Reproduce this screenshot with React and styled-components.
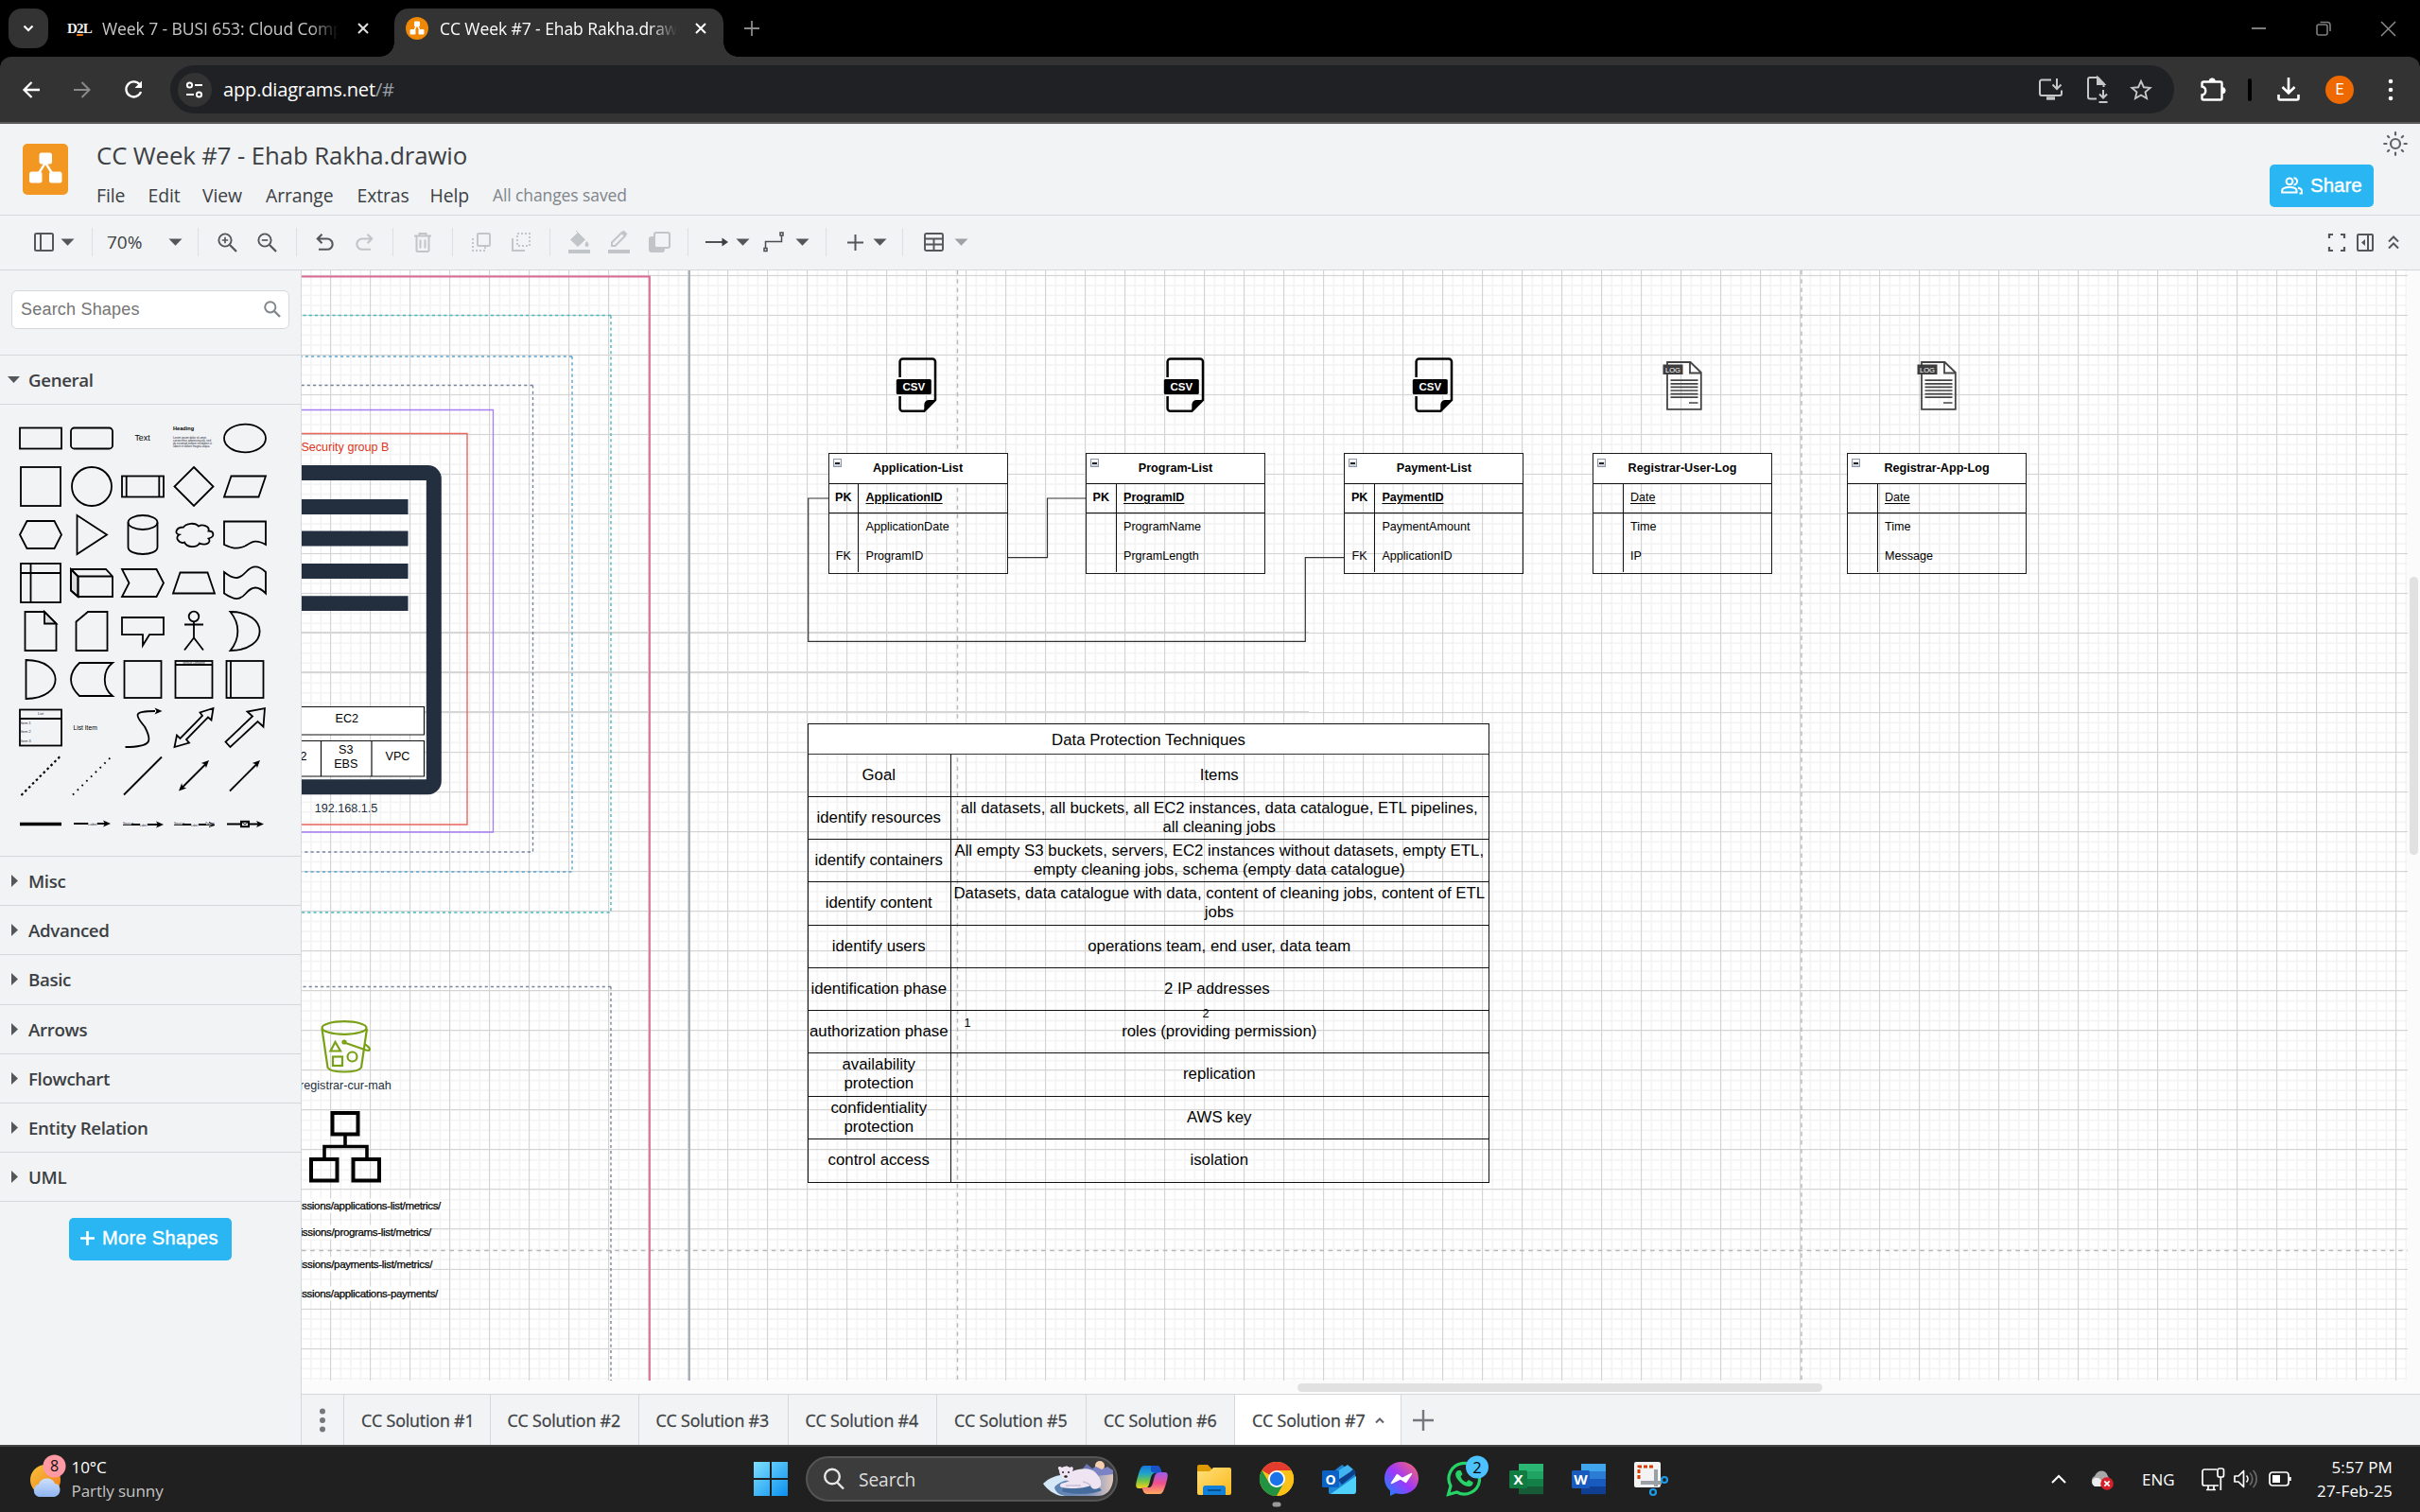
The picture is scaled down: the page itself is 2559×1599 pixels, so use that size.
import React from "react";
import styled, { createGlobalStyle, css } from "styled-components";

const UI = `"Open Sans", "Noto Sans", sans-serif`;
const ARIAL = `"Liberation Sans", Arial, sans-serif`;

const Global = createGlobalStyle`
  *, *::before, *::after { box-sizing: border-box; }
  html, body { margin: 0; padding: 0; background: #f1f3f4; }
  body { font-family: ${UI}; overflow: hidden; }
`;

const Screen = styled.div`
  display: flex;
  flex-direction: column;
  width: 2559px;
  height: 1599px;
  overflow: hidden;
`;

/* ---------- generic pieces ---------- */
const Slot = styled.div`
  flex: none;
  display: flex;
  align-items: center;
  justify-content: center;
  width: ${(p) => p.$w}px;
  margin-left: ${(p) => p.$ml || 0}px;
`;
const Label = styled.div`
  flex: none;
  white-space: nowrap;
  width: ${(p) => (p.$w ? `${p.$w}px` : "auto")};
  margin-left: ${(p) => p.$ml || 0}px;
  font-size: ${(p) => p.$s}px;
  letter-spacing: ${(p) => p.$ls || 0}px;
  color: ${(p) => p.$c || "inherit"};
  font-weight: ${(p) => p.$wt || 400};
`;

/* ---------- browser chrome ---------- */
const TabStrip = styled.div`
  flex: none;
  height: 60px;
  background: #000;
  display: flex;
  align-items: flex-end;
`;
const StripCell = styled.div`
  height: 60px;
  display: flex;
  align-items: center;
  width: ${(p) => p.$w}px;
  flex: none;
`;
const TabSearch = styled.div`
  width: 42px;
  height: 42px;
  margin-left: 9px;
  border-radius: 14px;
  background: #333;
  display: flex;
  align-items: center;
  justify-content: center;
`;
const D2L = styled.div`
  font: 700 15px "Liberation Serif", serif;
  color: #f0f0f0;
  width: 37px;
  letter-spacing: -0.8px;
  margin-left: 20px;
  span { text-decoration: underline; text-decoration-color: #e87511; text-decoration-thickness: 2px; }
`;
const FadeText = styled.div`
  flex: none;
  width: ${(p) => p.$w}px;
  margin-left: ${(p) => p.$ml || 0}px;
  overflow: hidden;
  white-space: nowrap;
  font-size: 17.5px;
  letter-spacing: ${(p) => p.$ls}px;
  color: ${(p) => p.$c};
  -webkit-mask-image: linear-gradient(90deg, #000 88%, transparent 100%);
  mask-image: linear-gradient(90deg, #000 88%, transparent 100%);
`;
const ActiveTab = styled.div`
  position: relative;
  flex: none;
  width: 348px;
  height: 51px;
  background: #333;
  border-radius: 15px 15px 0 0;
  display: flex;
  align-items: center;
  padding: 0 0 9px 12px;
  &::before, &::after {
    content: "";
    position: absolute;
    bottom: 0;
    width: 15px;
    height: 15px;
  }
  &::before { left: -15px; background: radial-gradient(circle at 0 0, transparent 14.5px, #333 15px); }
  &::after { right: -15px; background: radial-gradient(circle at 100% 0, transparent 14.5px, #333 15px); }
`;
const NavWrap = styled.div`
  flex: none;
  background: #000;
`;
const NavBar = styled.div`
  height: 71px;
  background: #333;
  border-radius: 12px 12px 0 0;
  border-bottom: 2px solid #5a5a5a;
  display: flex;
  align-items: center;
`;
const Omnibox = styled.div`
  flex: none;
  width: 2119px;
  height: 51px;
  margin-left: 15px;
  border-radius: 26px;
  background: #202124;
  display: flex;
  align-items: center;
  padding-left: 8px;
`;
const SiteInfo = styled.div`
  width: 36px;
  height: 36px;
  border-radius: 50%;
  background: #333;
  display: flex;
  align-items: center;
  justify-content: center;
`;
const UrlTail = styled.span`color: #9aa0a6;`;
const Divider = styled.div`
  width: 4px;
  height: 24px;
  border-radius: 2px;
  background: #000;
  margin-left: ${(p) => p.$ml}px;
`;
const Avatar = styled.div`
  width: 30px;
  height: 30px;
  border-radius: 50%;
  background: #ee6a00;
  color: #fff;
  font: 16px Roboto, sans-serif;
  display: flex;
  align-items: center;
  justify-content: center;
`;

/* ---------- application header ---------- */
const Header = styled.div`
  flex: none;
  height: 97px;
  background: #f1f3f5;
  border-bottom: 1px solid #d5d8db;
  display: flex;
`;
const Logo = styled.div`
  width: 48px;
  height: 54px;
  margin: 21px 0 0 24px;
  border-radius: 5px;
  background: #f29722;
`;
const HeadText = styled.div`
  flex: 1;
  margin-left: 30px;
  color: #3c4043;
`;
const DocTitle = styled.div`
  margin-top: 13px;
  height: 41px;
  line-height: 40px;
  font-size: 25.8px;
  letter-spacing: -0.12px;
  white-space: nowrap;
`;
const Menu = styled.div`
  display: flex;
  align-items: center;
  height: 42px;
`;
const HeadRight = styled.div`
  width: 159px;
  display: flex;
  flex-direction: column;
`;
const SunRow = styled.div`
  height: 43px;
  display: flex;
  justify-content: flex-end;
  align-items: center;
  padding: 0 13px 1px 0;
`;
const BlueButton = styled.div`
  background: #29b6f2;
  color: #fff;
  border-radius: 5px;
  display: flex;
  align-items: center;
  width: ${(p) => p.$w}px;
  height: 45px;
  padding: 0 0 2px 12px;
  font: ${(p) => p.$s}px ${ARIAL};
  -webkit-text-stroke: 0.4px #fff;
  letter-spacing: ${(p) => p.$ls || 0}px;
  white-space: nowrap;
  gap: ${(p) => p.$gap}px;
`;
const ToolBar = styled.div`
  flex: none;
  height: 58px;
  background: #f1f3f5;
  border-bottom: 1px solid #d5d8db;
  display: flex;
  align-items: center;
  padding-bottom: 1px;
`;
const Sep = styled.div`
  flex: none;
  width: 1px;
  height: 30px;
  margin-left: ${(p) => p.$ml}px;
  background: #dcdfe3;
`;
const Grow = styled.div`flex: 1;`;

/* ---------- body ---------- */
const Body = styled.div`
  flex: none;
  height: 1242px;
  display: flex;
`;
const Sidebar = styled.div`
  flex: none;
  width: 319px;
  background: #f1f3f5;
  border-right: 1px solid #d5d8db;
`;
const SearchArea = styled.div`
  height: 90px;
  padding: 21px 12px 0;
  border-bottom: 1px solid #d5d8db;
`;
const SearchBox = styled.div`
  height: 41px;
  background: #fff;
  border: 1px solid #d5d8db;
  border-radius: 6px;
  display: flex;
  align-items: center;
  justify-content: space-between;
  padding: 0 8px 1px 9px;
  font: 18px ${ARIAL};
  letter-spacing: 0.2px;
  color: #757575;
`;
const Section = styled.div`
  height: ${(p) => p.$h || 52.2}px;
  border-bottom: 1px solid #d5d8db;
  display: flex;
  align-items: center;
  gap: ${(p) => (p.$open ? 9 : 11)}px;
  padding-left: ${(p) => (p.$open ? 8 : 12)}px;
  color: #3c4043;
  font-size: 18.7px;
  font-weight: 600;
  letter-spacing: -0.35px;
`;
const Palette = styled.div`
  display: grid;
  grid-template-columns: repeat(5, 54px);
  grid-auto-rows: 51px;
  height: 478px;
  padding: 10px 0 0 16px;
  border-bottom: 1px solid #d5d8db;
`;
const MoreArea = styled.div`padding: 17px 0 0 73px;`;

const Work = styled.div`
  flex: 1;
  display: flex;
  flex-direction: column;
`;
const CanvasRow = styled.div`
  display: flex;
  height: 1174px;
`;
const Canvas = styled.div`
  position: relative;
  width: 2227px;
  height: 1174px;
  background: #fff;
  overflow: hidden;
  color: #000;
  font-family: ${ARIAL};
`;
const Drawing = styled.svg`
  position: absolute;
  left: 0;
  top: 0;
`;
const VTrack = styled.div`
  flex: 1;
  background: #fbfbfb;
  padding: 324px 0 0 2px;
`;
const VThumb = styled.div`
  width: 9px;
  height: 294px;
  border-radius: 5px;
  background: #e1e1e1;
`;
const HTrack = styled.div`
  height: 14px;
  background: #fbfbfb;
  padding: 3px 0 0 1053px;
`;
const HThumb = styled.div`
  width: 555px;
  height: 9px;
  border-radius: 5px;
  background: #e1e1e1;
`;
const PageTabs = styled.div`
  height: 54px;
  background: #f1f3f5;
  border-top: 1px solid #d5d8db;
  display: flex;
`;
const PageTab = styled.div`
  flex: none;
  width: ${(p) => p.$w}px;
  border-right: 1px solid #d5d8db;
  background: ${(p) => (p.$on ? "#fff" : "transparent")};
  display: flex;
  align-items: center;
  padding: 0 0 0 18px;
  gap: 11px;
  color: #3c4043;
  font-size: 17.8px;
  font-weight: 500;
  letter-spacing: -0.15px;
  -webkit-text-stroke: 0.3px #3c4043;
  white-space: nowrap;
`;
const TabMenu = styled.div`
  flex: none;
  width: 45px;
  border-right: 1px solid #d5d8db;
  display: flex;
  align-items: center;
  justify-content: center;
`;

/* ---------- diagram nodes ---------- */
const place = css`
  position: absolute;
  left: ${(p) => p.$x - 319}px;
  top: ${(p) => p.$y - 286}px;
`;
const Caption = styled.div`
  ${place}
  transform: translate(${(p) => (p.$right ? "-100%" : "-50%")}, -50%);
  font-size: ${(p) => p.$s || 12.6}px;
  line-height: 15px;
  color: ${(p) => p.$c || "#000"};
  background: ${(p) => p.$bg || "none"};
  letter-spacing: ${(p) => p.$ls || 0}px;
  -webkit-text-stroke: ${(p) => (p.$bg ? "0.25px #000" : "0")};
  text-align: center;
  white-space: nowrap;
`;
const Entity = styled.div`
  ${place}
  width: 190px;
  height: 127.5px;
  border: 1px solid #1c1c1c;
  font-size: 12.6px;
`;
const EntityHead = styled.div`
  position: relative;
  height: 32px;
  background: #fff;
  border-bottom: 1px solid #111;
  font-weight: 700;
  padding-bottom: 2px;
  display: flex;
  align-items: center;
  justify-content: center;
`;
const Fold = styled.div`
  position: absolute;
  left: 4px;
  top: 5px;
  width: 9px;
  height: 9px;
  border: 1px solid #8d95a8;
  background: linear-gradient(#fff, #c9cdd8);
  &::after {
    content: "";
    position: absolute;
    left: 1px;
    top: 3px;
    width: 5px;
    height: 1.5px;
    background: #222;
  }
`;
const EntityRow = styled.div`
  height: 31px;
  display: flex;
  border-bottom: ${(p) => (p.$key ? "1px solid #111" : "none")};
  font-weight: ${(p) => (p.$bold ? 700 : 400)};
  line-height: ${(p) => (p.$key ? 28 : 29)}px;
`;
const KeyCell = styled.div`
  width: 31.5px;
  border-right: 1px solid #111;
  text-align: center;
`;
const NameCell = styled.div`
  padding-left: 7.5px;
  text-decoration: ${(p) => (p.$u ? "underline" : "none")};
  text-underline-offset: 2px;
`;
const Protect = styled.div`
  ${place}
  width: 721px;
  height: 486px;
  border: 1px solid #111;
  font-size: 16.8px;
  line-height: 20px;
  text-align: center;
`;
const ProtectTitle = styled.div`
  height: 31.5px;
  background: #fff;
  border-bottom: 1px solid #333;
  line-height: 33px;
`;
const ProtectRow = styled.div`
  display: grid;
  grid-template-columns: 150.5px 1fr;
  height: 45.25px;
  border-bottom: ${(p) => (p.$last ? "none" : "1px solid #111")};
`;
const ProtectCell = styled.div`
  display: flex;
  align-items: center;
  justify-content: center;
  white-space: pre;
  padding-right: 1px;
  border-right: ${(p) => (p.$first ? "1px solid #111" : "none")};
`;

/* ---------- taskbar ---------- */
const Taskbar = styled.div`
  flex: none;
  height: 71px;
  background: #202020;
  border-top: 2px solid #434343;
  display: flex;
  align-items: center;
  color: #fff;
  padding-bottom: 1px;
`;
const TwoLines = styled.div`
  display: flex;
  flex-direction: column;
  text-align: ${(p) => p.$align || "left"};
  width: ${(p) => p.$w}px;
  margin-left: ${(p) => p.$ml}px;
  font-size: 17px;
  line-height: 25px;
  padding-bottom: 1px;
  white-space: nowrap;
  letter-spacing: ${(p) => p.$ls || 0}px;
  span + span { color: ${(p) => p.$c2 || "#fff"}; }
`;
const SearchPill = styled.div`
  width: 330px;
  height: 48px;
  margin-left: 19px;
  border-radius: 24px;
  border: 2px solid #555;
  background: #3c3c3c;
  display: flex;
  align-items: center;
  padding-left: 16px;
`;
const Apps = styled.div`
  display: flex;
  align-items: center;
  margin-left: 17px;
  gap: 28px;
`;
const AppIcon = styled.svg`
  width: 38px;
  height: 48px;
  overflow: visible;
`;
const HiddenDefs = styled.svg`
  width: 0;
  height: 0;
  flex: none;
`;

const G = "#54575a";
const Svg = ({ w, h, children, vb, ...r }) => (
  <svg width={w} height={h} viewBox={vb || `0 0 ${w} ${h}`} fill="none" overflow="visible" {...r}>
    {children}
  </svg>
);
const Tri = ({ c = "#54575a" }) => (
  <Svg w={15} h={8}><path d="M0.5 0.5H14.5L7.5 7.8Z" fill={c} /></Svg>
);
const XIcon = ({ c = "#fff" }) => (
  <Svg w={12} h={12} stroke={c} strokeWidth="2"><path d="M1 1 11 11M11 1 1 11" /></Svg>
);

const Browser = () => (
  <>
    <TabStrip>
      <StripCell $w={417}>
        <TabSearch><Svg w={12} h={8} stroke="#fff" strokeWidth="2.2"><path d="M1.5 1.5 6 6 10.5 1.5" /></Svg></TabSearch>
        <D2L>D<span>2</span>L</D2L>
        <FadeText $w={250} $c="#c7c7c7" $ls={-0.08}>Week 7 - BUSI 653: Cloud Computing</FadeText>
        <Slot $w={20} $ml={16}><XIcon c="#e0e0e0" /></Slot>
      </StripCell>
      <ActiveTab>
        <Svg w={24} h={24}>
          <circle cx="12" cy="12" r="12" fill="#f08705" />
          <g stroke="#fff" strokeWidth="1.6"><path d="M12 8 8 16M12 8 16 16" /></g>
          <g fill="#fff"><rect x="9" y="4.5" width="6" height="5.5" rx="1" /><rect x="4.5" y="13" width="6" height="5.5" rx="1" /><rect x="13.5" y="13" width="6" height="5.5" rx="1" /></g>
        </Svg>
        <FadeText $w={251} $c="#fff" $ls={-0.08} $ml={12}>CC Week #7 - Ehab Rakha.drawio</FadeText>
        <Slot $w={20} $ml={15}><XIcon /></Slot>
      </ActiveTab>
      <StripCell $w={60}><Slot $w={60}><Svg w={16} h={16} stroke="#8a8a8a" strokeWidth="1.8"><path d="M8 0V16M0 8H16" /></Svg></Slot></StripCell>
      <Grow />
      <StripCell $w={207}>
        <Slot $w={72}><Svg w={15} h={2}><path d="M0 1H15" stroke="#7d7d7d" strokeWidth="2" /></Svg></Slot>
        <Slot $w={66}>
          <Svg w={16} h={16} stroke="#7d7d7d" strokeWidth="1.6"><rect x="1" y="4" width="11" height="11" rx="2" /><path d="M4.5 1.5H12a3 3 0 0 1 3 3V11" /></Svg>
        </Slot>
        <Slot $w={71}><Svg w={15} h={15} stroke="#8a8a8a" strokeWidth="1.5"><path d="M0 0 15 15M15 0 0 15" /></Svg></Slot>
      </StripCell>
    </TabStrip>
    <NavWrap>
      <NavBar>
        <Slot $w={66}><Svg w={18} h={18} stroke="#fff" strokeWidth="2.3"><path d="M18 9H1.5M9.5 1 1.5 9 9.5 17" /></Svg></Slot>
        <Slot $w={42}><Svg w={18} h={18} stroke="#8a8a8a" strokeWidth="2"><path d="M0 9H16.5M8.5 1 16.5 9 8.5 17" /></Svg></Slot>
        <Slot $w={48} $ml={9}>
          <Svg w={19} h={19}><path d="M15.8 4.6A8 8 0 1 0 17 12" stroke="#fff" strokeWidth="2.3" /><path d="M18 0.5V8H10.5Z" fill="#fff" /></Svg>
        </Slot>
        <Omnibox>
          <SiteInfo>
            <Svg w={20} h={18} stroke="#fff" strokeWidth="2"><circle cx="4.5" cy="4" r="2.6" /><path d="M10 4H18M1 14H9" /><circle cx="14.5" cy="14" r="2.6" /></Svg>
          </SiteInfo>
          <Label $s={20.1} $c="#fff" $ml={12} $w={1687} $ls={-0.2}>app.diagrams.net<UrlTail>/#</UrlTail></Label>
          <Slot $w={50} $ml={220}>
            <Svg w={25} h={23} stroke="#c7c7c7" strokeWidth="2"><path d="M13 1.5H3a2 2 0 0 0-2 2V16a2 2 0 0 0 2 2H22a2 2 0 0 0 2-2V12.5" /><path d="M19 0V10M14.5 6.5 19 11 23.5 6.5" /><path d="M8 21H17" strokeWidth="3.4" /></Svg>
          </Slot>
          <Slot $w={50}>
            <Svg w={22} h={28} stroke="#c7c7c7" strokeWidth="2"><path d="M10 23.5H3a2 2 0 0 1-2-2V3a2 2 0 0 1 2-2H11.5L17.5 7.5V11" /><path d="M11 1V8H18Z" fill="#c7c7c7" /><path d="M17 14V22M13 18.5 17 22.5 21 18.5M12.5 27H21.5" /></Svg>
          </Slot>
          <Slot $w={46} $ml={-2}>
            <Svg w={22} h={22} vb="2 1.5 20 20" stroke="#c7c7c7" strokeWidth="1.7"><path d="M12 3.2 14.6 9l6.2.6-4.7 4.1 1.4 6.1L12 16.5 6.5 19.8l1.4-6.1L3.2 9.6 9.4 9Z" /></Svg>
          </Slot>
        </Omnibox>
        <Slot $w={52} $ml={15}>
          <Svg w={26} h={26} stroke="#fff" strokeWidth="2.4"><path d="M3 4.5H21a1.5 1.5 0 0 1 1.5 1.5V22a1.5 1.5 0 0 1-1.5 1.5H3A1.5 1.5 0 0 1 1.5 22V18.5c5-1 5-8 0-9V6A1.5 1.5 0 0 1 3 4.5Z" /><path d="M9 4a3.2 3.2 0 0 1 6.4 0ZM23 10.5a3.2 3.2 0 0 1 0 6.4Z" fill="#fff" strokeWidth="0.8" /></Svg>
        </Slot>
        <Divider $ml={11} />
        <Slot $w={50} $ml={14}>
          <Svg w={24} h={25} stroke="#fff" strokeWidth="2.6"><path d="M12 0V16M5.5 10 12 16.5 18.5 10" /><path d="M1.5 18V22a1.5 1.5 0 0 0 1.5 1.5H21a1.5 1.5 0 0 0 1.5-1.5V18" /></Svg>
        </Slot>
        <Slot $w={30} $ml={14}><Avatar>E</Avatar></Slot>
        <Slot $w={40} $ml={19}><Svg w={6} h={24}><g fill="#fff"><circle cx="3" cy="3" r="2.3" /><circle cx="3" cy="12" r="2.3" /><circle cx="3" cy="21" r="2.3" /></g></Svg></Slot>
      </NavBar>
    </NavWrap>
  </>
);

const AppHeader = () => (
  <Header>
    <Logo>
      <Svg w={48} h={54} vb="0 -2 48 54">
        <path d="M24 18 14 34M24 18 34 34" stroke="#fff" strokeWidth="2.4" />
        <g fill="#fff">
          <rect x="17.5" y="7.500" width="13.500" height="12" rx="2.500" />
          <rect x="7" y="27.500" width="13.500" height="12" rx="2.500" />
          <rect x="28" y="27.500" width="13.500" height="12" rx="2.500" />
        </g>
      </Svg>
    </Logo>
    <HeadText>
      <DocTitle>CC Week #7 - Ehab Rakha.drawio</DocTitle>
      <Menu>
        <Label $s={19.4} $w={54.5} $ls={-0.1}>File</Label>
        <Label $s={19.4} $w={57.5} $ls={-0.1}>Edit</Label>
        <Label $s={19.4} $w={67} $ls={-0.1}>View</Label>
        <Label $s={19.4} $w={96.5} $ls={-0.1}>Arrange</Label>
        <Label $s={19.4} $w={77} $ls={-0.1}>Extras</Label>
        <Label $s={19.4} $w={66.5} $ls={-0.1}>Help</Label>
        <Label $s={17.5} $c="#80868b" $ls={-0.1}>All changes saved</Label>
      </Menu>
    </HeadText>
    <HeadRight>
      <SunRow>
        <Svg w={26} h={26} stroke="#5f6368" strokeWidth="2.2" strokeLinecap="round"><circle cx="13" cy="13" r="5" /><path d="M13 1.2V3.5M13 22.5V24.8M1.2 13H3.5M22.5 13H24.8M5 5 6.2 6.2M19.8 19.8 21 21M21 5 19.8 6.2M6.2 19.8 5 21" /></Svg>
      </SunRow>
      <BlueButton $w={110} $s={20.5} $gap={8}>
        <Svg w={23} h={18} stroke="#fff" strokeWidth="2"><circle cx="9" cy="4.8" r="3.4" /><path d="M1.2 16.5V14.5C1.2 12 5.5 11 9 11s7.5 1 7.5 3.5V16.5Z" /><path d="M13.5 1.2a3.6 3.6 0 0 1 0 7.2M18 11.5c2.5.8 4 2 4 3.2V17.5H19.5" /></Svg>
        Share
      </BlueButton>
    </HeadRight>
  </Header>
);

const D = "#c2c5c8";
const Magnify = ({ plus }) => (
  <Svg w={21} h={21} stroke={G} strokeWidth="1.9"><circle cx="8" cy="8" r="6.6" /><path d="M13 13 20 20" strokeWidth="2.3" /><path d={plus ? "M4.8 8H11.2M8 4.8V11.2" : "M4.8 8H11.2"} strokeWidth="1.7" /></Svg>
);
const Tools = () => (
  <ToolBar>
    <Slot $w={30} $ml={31}><Svg w={21} h={20} stroke={G} strokeWidth="2"><rect x="1" y="1" width="19" height="18" rx="1.5" /><path d="M7 1V19" /></Svg></Slot>
    <Slot $w={21}><Tri /></Slot>
    <Sep $ml={15} />
    <Label $s={19} $w={61} $ml={15} $c="#3c4043">70%</Label>
    <Slot $w={22}><Tri /></Slot>
    <Sep $ml={13} />
    <Slot $w={42} $ml={9}><Magnify plus /></Slot>
    <Slot $w={42}><Magnify /></Slot>
    <Sep $ml={10} />
    <Slot $w={41} $ml={9}><Svg w={19} h={18} stroke={G} strokeWidth="2.1"><path d="M2 5.5H12a5.6 5.6 0 0 1 0 11.3H3M6.5 0.8 1.8 5.5 6.5 10.2" /></Svg></Slot>
    <Slot $w={42}><Svg w={19} h={18} stroke={D} strokeWidth="2.1"><path d="M17 5.5H7a5.6 5.6 0 0 0 0 11.3H16M12.5 0.8 17.2 5.5 12.5 10.2" /></Svg></Slot>
    <Sep $ml={9} />
    <Slot $w={42} $ml={10}><Svg w={18} h={21} stroke={D} strokeWidth="2"><path d="M0 3.5H18M5.500 3V1H12.5V3M2.5 4V18.5a1.5 1.5 0 0 0 1.5 1.5H14a1.5 1.5 0 0 0 1.5-1.5V4M6.5 7.5V16.5M11.5 7.5V16.5" /></Svg></Slot>
    <Sep $ml={10} />
    <Slot $w={42} $ml={9}><Svg w={20} h={20} stroke={D} strokeWidth="1.9"><rect x="6" y="1" width="13" height="13" rx="1" /><path d="M1 6V19H14V15" strokeDasharray="2 2" /></Svg></Slot>
    <Slot $w={42}><Svg w={20} h={20} stroke={D} strokeWidth="1.9"><rect x="6" y="1" width="13" height="13" strokeDasharray="2 2" /><path d="M1 6V19H14" /></Svg></Slot>
    <Sep $ml={9} />
    <Slot $w={42} $ml={10}><Svg w={24} h={26}><path d="M8 1 17.5 10.5 10 17.5 2.5 10.5 10 3.5" fill={D} stroke={D} /><path d="M19.5 12c1.5 2 2 3 2 4a2 2 0 0 1-4 0c0-1 .5-2 2-4Z" fill={D} /><path d="M0 21H23V25H0Z" fill={D} /></Svg></Slot>
    <Slot $w={42}><Svg w={24} h={26}><path d="M4 17V13.5L14.5 3l3.5 3.5L7.5 17Z" stroke={D} strokeWidth="2" /><path d="M15.5 1.5 19.5 5.5" stroke={D} strokeWidth="3" /><path d="M0 21H23V25H0Z" fill={D} /></Svg></Slot>
    <Slot $w={42}><Svg w={23} h={22}><rect x="0" y="5" width="17" height="17" rx="3" fill={D} /><rect x="6" y="1" width="16" height="16" rx="2" fill="#f1f3f5" stroke={D} strokeWidth="2" /></Svg></Slot>
    <Sep $ml={9} />
    <Slot $w={24} $ml={18}><Svg w={24} h={10}><path d="M0 5H18" stroke="#3c4043" strokeWidth="1.8" /><path d="M17.5 0.5 24 5 17.5 9.5Z" fill="#3c4043" /></Svg></Slot>
    <Slot $w={30}><Tri /></Slot>
    <Slot $w={36}><Svg w={22} h={22} stroke="#4a4d50" strokeWidth="1.5"><path d="M2.5 17V10.5H19.5V4" /><rect x="1" y="17.5" width="3" height="3" /><rect x="18" y="1" width="3" height="3" /></Svg></Slot>
    <Slot $w={24}><Tri /></Slot>
    <Sep $ml={13} />
    <Slot $w={32} $ml={14}><Svg w={17} h={17} stroke={G} strokeWidth="2"><path d="M8.5 0V17M0 8.5H17" /></Svg></Slot>
    <Slot $w={20}><Tri /></Slot>
    <Sep $ml={14} />
    <Slot $w={40} $ml={12}><Svg w={21} h={20} stroke={G} strokeWidth="1.9"><rect x="1" y="1" width="19" height="18" rx="1.5" /><path d="M1 6.5H20M1 12.5H20M10.5 6.5V19" /></Svg></Slot>
    <Slot $w={19}><Tri c="#9ea1a5" /></Slot>
    <Grow />
    <Slot $w={30}><Svg w={18} h={19} stroke={G} strokeWidth="2.2"><path d="M1 5V1H5M13 1H17V5M17 14V18H13M5 18H1V14" /></Svg></Slot>
    <Slot $w={30}><Svg w={18} h={19} stroke={G} strokeWidth="2"><rect x="1" y="1" width="16" height="17" rx="1" /><path d="M12 1V18" /><path d="M9 6V13L5 9.5Z" fill={G} stroke="none" /></Svg></Slot>
    <Slot $w={30}><Svg w={12} h={15} stroke={G} strokeWidth="2"><path d="M1 6.5 6 1.5 11 6.5M1 13.5 6 8.5 11 13.5" /></Svg></Slot>
    <Slot $w={13} />
  </ToolBar>
);

/* palette thumbnails, each drawn around the centre of its cell */
const tiny = { fontFamily: "Liberation Sans, sans-serif", fill: "#223", stroke: "none" };
const ah = (x, y, a) => <path d="M0 0-8-3.6-6 0-8 3.6Z" fill="#000" stroke="none" transform={`translate(${x} ${y}) rotate(${a})`} />;
const shapes = [
  <rect x="-22" y="-11" width="44" height="22" />,
  <rect x="-22" y="-11" width="44" height="22" rx="3.5" />,
  <text x="-0.5" y="2.5" textAnchor="middle" fontSize="8.8" {...tiny} fill="#000">Text</text>,
  <g {...tiny}>
    <text x="-22" y="-8.5" fontSize="5.6" fontWeight="700" fill="#000">Heading</text>
    {["Lorem ipsum dolor sit amet,", "consectetur adipisicing elit, sed", "do eiusmod tempor incididunt ut", "labore et dolore magna aliqua."].map((t, i) => (
      <text key={i} x="-22" y={0.2 + i * 3.2} fontSize="2.9">{t}</text>
    ))}
  </g>,
  <ellipse rx="22" ry="14.8" />,
  <rect x="-21" y="-20.5" width="42" height="41" />,
  <ellipse rx="21" ry="20.5" />,
  <g><rect x="-22" y="-11" width="44" height="22" /><path d="M-17.3-11V11M17.3-11V11" /></g>,
  <path d="M0-20.5 20.5 0 0 20.5-20.5 0Z" />,
  <path d="M-22 11-14.5-11H22L14.5 11Z" />,
  <path d="M-22 0-14.5-14.5H14.5L22 0 14.5 14.5H-14.5Z" />,
  <path d="M-15.5-20.5 16 0-15.5 20.5Z" />,
  <g><path d="M-15.5-13V13C-15.5 23 15.5 23 15.5 13V-13" /><ellipse cy="-13" rx="15.5" ry="7.5" /></g>,
  <path d="M-11-8C-19-8-21-1-15.5 0-21 3-15 10-10 8-7 14 3 14 6 9 13 12 19 8 15.5 4 23 2 21-4 15.5-4 17-9 9-11.5 5-9 1-13.5-8-12-11-8Z" />,
  <path d="M-22-14H22V10.5C11 4 7 8 0 12-9 16-14 14-22 10.5Z" />,
  <g><rect x="-21" y="-20.5" width="42" height="41" /><path d="M-10.5-20.5V20.5M-21-10.5H21" /></g>,
  <g><path d="M-22-14.5-14.5-7V14.5L-22 8Z" fill="#ddd" /><path d="M-22-14.5H15L22-7V14.5H-14.5L-22 8ZM-22-14.5-14.5-7H22M-14.5-7V14.5" /></g>,
  <path d="M-22-14.5H14.5L22 0 14.5 14.5H-22L-14.5 0Z" />,
  <path d="M-22 11-14.5-11H14.5L22 11Z" />,
  <path d="M-22-11.5C-10-2-5-5 1-11.5 8-19 14-19 22-11.5V11C14 3 8 3 1 11-5 18-10 19-22 11Z" />,
  <g><path d="M-16.5-20.5H4L16.5-8V20.5H-16.5Z" /><path d="M4-20.5V-8H16.5Z" fill="#ddd" /></g>,
  <path d="M-4-20.5H16.5V20.5H-16.5V-10Z" />,
  <path d="M-22-14.5H22V3.7H7L0 15V3.7H-22Z" />,
  <g><ellipse cy="-15.5" rx="5.3" ry="5.3" /><path d="M0-10V7M-10-7H10M0 7-10 20M0 7 10 20" /></g>,
  <path d="M-15.5-20.5C26-20.5 26 20.5-15.5 20.5-5 8-5-8-15.5-20.5Z" />,
  <path d="M-15.5-20.5C26-20.5 26 20.5-15.5 20.5Z" />,
  <path d="M-13-17.5H22C11-9 11 9 22 17.5H-13C-25 6-25-6-13-17.5Z" />,
  <rect x="-19.5" y="-19.5" width="39" height="39" />,
  <g><rect x="-19.5" y="-19.5" width="39" height="39" /><path d="M-19.5-15.5H19.5" /><text y="-16.3" textAnchor="middle" fontSize="3" {...tiny}>Vertical Container</text></g>,
  <g><rect x="-19.5" y="-19.5" width="39" height="39" /><path d="M-15-19.5V19.5" /></g>,
  <g><rect x="-22" y="-19" width="44" height="38" /><path d="M-22-9.5H22" />
    <g {...tiny} fontSize="3.8"><text y="-14" textAnchor="middle">List</text><text x="-21" y="-4">Item 1</text><text x="-21" y="5">Item 2</text><text x="-21" y="15">Item 3</text></g></g>,
  <text x="-19.5" y="2" fontSize="6.7" {...tiny} fill="#000">List Item</text>,
  <g><path d="M-18.5 20.5C10 20.5 10 14 2-1-9-14-10-17.5 13-17.5" />{ah(20.5, -17.5, 0)}</g>,
  <path d="M20.5-20.5 18.5-8 15-11-8 12.5-5 16-20.5 20.5-18 8-14.5 11.5 9-12.5 6.5-16Z" />,
  <path d="M21-20.5 19.5-1 13.5-6.5-15.5 20.5-20.5 15 8-12 2.5-17Z" />,
  <path d="M-20.5 20.5 20.5-20.5" strokeDasharray="2.5 3" strokeWidth="2.2" />,
  <path d="M-20 20 20-19.5" strokeDasharray="1.7 5" strokeWidth="1.9" />,
  <path d="M-20 20 20-20" />,
  <g><path d="M-13 13 13-13" />{ah(16, -16.5, -45)}{ah(-16, 16, 135)}</g>,
  <g><path d="M-16 16 13-13" />{ah(16, -16.5, -45)}</g>,
  <path d="M-22 0H22" strokeWidth="3.6" />,
  <g><path d="M-19-.5H-4M6-.5H14" strokeWidth="2" />{ah(20, -0.5, 0)}<text x="-4" y="1.500" fontSize="4" {...tiny}>Label</text></g>,
  <g><path d="M-21 1H-11" strokeWidth=".8" /><path d="M-12 .5H-3M5 .5H16" strokeWidth="2" />{ah(22, 0.5, 0)}<text x="-21" y="0" fontSize="3.5" {...tiny}>Source</text><text x="-3" y="2" fontSize="3" {...tiny}>Label</text></g>,
  <g><path d="M-21 1H-11M11 1H21" strokeWidth=".8" /><path d="M-12 .5H-3M5 .5H13" strokeWidth="2" /><path d="M16-2 22 1 16 3" strokeWidth="1" /><text x="-21" y="0" fontSize="3.5" {...tiny}>Source</text><text x="12" y="0" fontSize="3.5" {...tiny}>Target</text><text x="-3" y="2" fontSize="3" {...tiny}>Label</text></g>,
  <g><path d="M-19 0H-4M4 0H14" strokeWidth="2" />{ah(20, 0, 0)}<rect x="-4" y="-2.7" width="8" height="5.4" strokeWidth="2" /><path d="M-4-2.7 0 .5 4-2.7" strokeWidth="1" /></g>,
];

const SidePanel = () => (
  <Sidebar>
    <SearchArea>
      <SearchBox>
        Search Shapes
        <Svg w={18} h={18} stroke="#80868b" strokeWidth="2"><circle cx="6.8" cy="6.8" r="5.6" /><path d="M11 11 17 17" strokeWidth="2.4" /></Svg>
      </SearchBox>
    </SearchArea>
    <Section $open $h={52}><Svg w={13} h={7}><path d="M0 0H13L6.5 7Z" fill={G} /></Svg>General</Section>
    <Palette>
      {shapes.map((s, i) => (
        <svg key={i} width="54" height="51" viewBox="-27 -25.5 54 51" fill="none" stroke="#000" strokeWidth="1.8">{s}</svg>
      ))}
    </Palette>
    {["Misc", "Advanced", "Basic", "Arrows", "Flowchart", "Entity Relation", "UML"].map((t) => (
      <Section key={t}><Svg w={7} h={13}><path d="M0 0V13L7 6.5Z" fill={G} /></Svg>{t}</Section>
    ))}
    <MoreArea>
      <BlueButton $w={172} $s={20} $gap={8} $ls={0.35}>
        <Svg w={15} h={15} stroke="#fff" strokeWidth="2.6"><path d="M7.5 0V15M0 7.5H15" /></Svg>
        More Shapes
      </BlueButton>
    </MoreArea>
  </Sidebar>
);

/* ---------- diagram ---------- */
const range = (a, b, s) => Array.from({ length: Math.ceil((b - a) / s) }, (_, i) => a + i * s);
const GridLines = () => (
  <>
    <g fill="#f4f4f4">
      {range(328, 2546, 10.5).map((x) => <rect key={x} x={x} y="286" width="1.7" height="1174" />)}
      {range(290.5, 1460, 10.51).map((y) => <rect key={y} x="319" y={y} width="2227" height="1.7" />)}
    </g>
    <g fill="#d4d4d4" shapeRendering="crispEdges">
      {range(349, 2546, 42).map((x) => <rect key={x} x={x} y="286" width="1" height="1174" />)}
      {range(291, 1460, 42.04).map((y) => <rect key={y} x="319" y={Math.floor(y)} width="2227" height="1" />)}
    </g>
    <g fill="#d6d6d6">
      {[668, 710, 752].map((y) => <rect key={y} x="319" y={y} width="1065" height="2" />)}
    </g>
    <g stroke="#b8b8b8" strokeWidth="1.4" strokeDasharray="4.6 4.6">
      <path d="M1012.5 286V1460M1905 286V1460M319 1322.5H2546" />
    </g>
  </>
);

const Csv = ({ x }) => (
  <g transform={`translate(${x} 378)`}>
    <path d="M1.3 21V4.5a3 3 0 0 1 3-3H35.7a3 3 0 0 1 3 3V45L27 56.7H4.3a3 3 0 0 1-3-3V41" stroke="#000" strokeWidth="2.5" fill="none" />
    <path d="M39.5 45H32a5 5 0 0 0-5 5V57Z" fill="#000" />
    <rect x="-2.5" y="23" width="37" height="16" rx="1.5" fill="#000" />
    <text x="16" y="35" fontSize="11.5" fontWeight="700" fontFamily="Liberation Sans" fill="#fff" textAnchor="middle">CSV</text>
  </g>
);
const Log = ({ x }) => (
  <g transform={`translate(${x} 382)`} stroke="#444" fill="none" strokeWidth="1.8">
    <path d="M1 1H25.5L36.8 12V50.8H1Z" />
    <path d="M25 1V12.5H37" />
    <path d="M4.5 20.2H33.5M4.5 23.8H33.5M4.5 27.4H33.5M4.5 31H33.5M4.5 34.6H33.5M4.5 38.2H33.5M24 44H33.5" strokeWidth="1.7" />
    <rect x="-3.5" y="3.5" width="21" height="10.5" fill="#3d3d3d" stroke="none" />
    <text x="7" y="11.6" fontSize="7.6" fontFamily="Liberation Sans" fill="#fff" stroke="none" textAnchor="middle">LOG</text>
  </g>
);

const entities = [
  { x: 875.5, y: 479, t: "Application-List", r: [["PK", "ApplicationID", 1], ["", "ApplicationDate"], ["FK", "ProgramID"]] },
  { x: 1148, y: 479, t: "Program-List", r: [["PK", "ProgramID", 1], ["", "ProgramName"], ["", "PrgramLength"]] },
  { x: 1421.4, y: 479, t: "Payment-List", r: [["PK", "PaymentID", 1], ["", "PaymentAmount"], ["FK", "ApplicationID"]] },
  { x: 1684, y: 479, t: "Registrar-User-Log", r: [["", "Date", 0], ["", "Time"], ["", "IP"]] },
  { x: 1953, y: 479, t: "Registrar-App-Log", r: [["", "Date", 0], ["", "Time"], ["", "Message"]] },
];
const protectRows = [
  ["Goal", "Items"],
  ["identify resources", "all datasets, all buckets, all EC2 instances, data catalogue, ETL pipelines,\nall cleaning jobs"],
  ["identify containers", "All empty S3 buckets, servers, EC2 instances without datasets, empty ETL,\nempty cleaning jobs, schema (empty data catalogue)"],
  ["identify content", "Datasets, data catalogue with data, content of cleaning jobs, content of ETL\njobs"],
  ["identify users", "operations team, end user, data team"],
  ["identification phase", "2 IP addresses "],
  ["authorization phase", "roles (providing permission)"],
  ["availability\nprotection", "replication"],
  ["confidentiality\nprotection", "AWS key"],
  ["control access", "isolation"],
];

const Diagram = () => (
  <Canvas>
    <Drawing width="2227" height="1174" viewBox="319 286 2227 1174" fill="none">
      <GridLines />
      <path d="M729 286V1460" stroke="#a9b0bb" strokeWidth="2" />
      <path d="M310 292.5H687V1470" stroke="#dd6b93" strokeWidth="1.8" />
      <g strokeDasharray="3.1 3.1" strokeWidth="1.4">
        <path d="M646 334V965H310M646 333.5H310" stroke="#45b9ba" />
        <path d="M605 377V922H310M605 377H310" stroke="#5aa4cf" />
        <path d="M563.5 407.5V901H310M563.5 407.5H310" stroke="#77839a" />
        <path d="M646 1043.5V1470M646 1043.5H310" stroke="#77839a" />
      </g>
      <path d="M310 433.5H521.5V880H310" stroke="#a77df3" strokeWidth="1.3" />
      <path d="M310 458.5H494V872H310" stroke="#e8665a" strokeWidth="1.4" />
      <path d="M310 500H452.5a6.3 6.3 0 0 1 6.3 6.3V826a6.3 6.3 0 0 1-6.3 6.3H310" stroke="#232f3e" strokeWidth="16" />
      <path d="M310 536H431.5M310 569.5H431.5M310 604H431.5M310 638.2H431.5" stroke="#232f3e" strokeWidth="15.8" />
      <g fill="#fff" stroke="#111" strokeWidth="1.2">
        <path d="M310 747.5H448.5V777H310ZM310 783.5H448.5V821H310Z" />
        <path d="M339.5 783.5V821M393 783.5V821" />
      </g>
      <path d="M1065.5 589.7H1107.5V527H1148.5M876 527H854.7V678.3H1380.3V589.7H1421.5" stroke="#333" strokeWidth="1.2" />
      {[950.3, 1233.3, 1496.3].map((x) => <Csv key={x} x={x} />)}
      <Log x={1762} />
      <Log x={2031} />
      <g stroke="#7aa116" strokeWidth="2.2">
        <ellipse cx="364" cy="1087" rx="23.5" ry="6.8" />
        <path d="M340.5 1088 346.5 1129C350 1135 378 1135 382 1129L388 1088" />
        <path d="M364 1102.5 387 1110.5C392 1112 393 1109 386 1104.5" />
        <circle cx="364" cy="1102" r="1.5" />
        <path d="M354.5 1102 349.5 1111.5H360Z" />
        <rect x="352" y="1117.5" width="10" height="9.5" />
        <circle cx="372.5" cy="1117.5" r="5" />
      </g>
      <g stroke="#000" strokeWidth="4">
        <rect x="351.5" y="1177" width="27" height="22.5" />
        <rect x="329" y="1226" width="27.5" height="22.5" />
        <rect x="373.5" y="1226" width="27.5" height="22.5" />
        <path d="M365 1200V1212.5M343 1226V1212.5H388V1226" strokeWidth="3.6" />
      </g>
    </Drawing>
    <Caption $x={411.5} $y={472.5} $right $c="#dd3522">Security group B</Caption>
    <Caption $x={366.8} $y={760}>EC2</Caption>
    <Caption $x={324.5} $y={800} $right>EC2</Caption>
    <Caption $x={365.8} $y={801}>S3<br />EBS</Caption>
    <Caption $x={420.5} $y={800}>VPC</Caption>
    <Caption $x={366} $y={855} $c="#232f3e">192.168.1.5</Caption>
    <Caption $x={413.7} $y={1148} $right $c="#232f3e">registrar-cur-mah</Caption>
    <Caption $x={466} $y={1275} $right $s={11.5} $bg="#fff" $ls={-0.33}>missions/applications-list/metrics/</Caption>
    <Caption $x={456} $y={1303} $right $s={11.5} $bg="#fff" $ls={-0.33}>missions/programs-list/metrics/</Caption>
    <Caption $x={457} $y={1337} $right $s={11.5} $bg="#fff" $ls={-0.33}>missions/payments-list/metrics/</Caption>
    <Caption $x={463} $y={1368} $right $s={11.5} $bg="#fff" $ls={-0.33}>missions/applications-payments/</Caption>
    {entities.map((e) => (
      <Entity key={e.t} $x={e.x} $y={e.y}>
        <EntityHead><Fold />{e.t}</EntityHead>
        {e.r.map(([k, n, b], i) => (
          <EntityRow key={i} $key={i === 0} $bold={b}>
            <KeyCell>{k}</KeyCell>
            <NameCell $u={i === 0}>{n}</NameCell>
          </EntityRow>
        ))}
      </Entity>
    ))}
    <Protect $x={854} $y={765}>
      <ProtectTitle>Data Protection Techniques</ProtectTitle>
      {protectRows.map(([a, b], i) => (
        <ProtectRow key={i} $last={i === protectRows.length - 1}>
          <ProtectCell $first>{a}</ProtectCell>
          <ProtectCell>{b}</ProtectCell>
        </ProtectRow>
      ))}
    </Protect>
    <Caption $x={1023} $y={1082}>1</Caption>
    <Caption $x={1275} $y={1072}>2</Caption>
  </Canvas>
);

const Bottom = () => (
  <PageTabs>
    <TabMenu><Svg w={6} h={26}><g fill="#74777b"><circle cx="3" cy="3.5" r="3" /><circle cx="3" cy="13" r="3" /><circle cx="3" cy="22.5" r="3" /></g></Svg></TabMenu>
    {[154.5, 157, 158, 157.5, 158, 157].map((w, i) => <PageTab key={i} $w={w}>CC Solution #{i + 1}</PageTab>)}
    <PageTab $w={176} $on>CC Solution #7 <Svg w={10} h={6} stroke="#5f6368" strokeWidth="2"><path d="M1 5.5 5 1.5 9 5.5" /></Svg></PageTab>
    <Slot $w={46}><Svg w={22} h={22} stroke="#74777b" strokeWidth="2.4"><path d="M11 0V22M0 11H22" /></Svg></Slot>
  </PageTabs>
);

/* ---------- taskbar icons ---------- */
const Defs = () => (
  <HiddenDefs>
    <defs>
      <linearGradient id="win" x1="0" y1="0" x2="1" y2="1"><stop stopColor="#7fe0ff" /><stop offset="1" stopColor="#0a90f0" /></linearGradient>
      <linearGradient id="cpA" x1="0" y1="0" x2="0" y2="1"><stop stopColor="#1677e0" /><stop offset=".35" stopColor="#1fa5c9" /><stop offset=".65" stopColor="#6cc24a" /><stop offset="1" stopColor="#f5d21a" /></linearGradient>
      <linearGradient id="cpB" x1="0" y1="0" x2="0" y2="1"><stop stopColor="#9b5df0" /><stop offset=".5" stopColor="#ef4f8c" /><stop offset="1" stopColor="#ffab5e" /></linearGradient>
      <linearGradient id="fold" x1="0" y1="0" x2="1" y2="1"><stop stopColor="#ffe07a" /><stop offset="1" stopColor="#fbb81c" /></linearGradient>
      <linearGradient id="msg" x1="0" y1="1" x2="1" y2="0"><stop stopColor="#0a8dff" /><stop offset=".5" stopColor="#a037fb" /><stop offset="1" stopColor="#ff6a63" /></linearGradient>
      <linearGradient id="sun" x1="0" y1="0" x2="1" y2="1"><stop stopColor="#f9c23c" /><stop offset="1" stopColor="#ee7a1a" /></linearGradient>
      <linearGradient id="cl" x1="0" y1="0" x2="0" y2="1"><stop stopColor="#cfe0fb" /><stop offset="1" stopColor="#8fb5f2" /></linearGradient>
      <linearGradient id="ice" x1="0" y1="0" x2="1" y2="0"><stop stopColor="#5b82b0" /><stop offset=".6" stopColor="#7f93be" /><stop offset="1" stopColor="#e3c9bd" /></linearGradient>
    </defs>
  </HiddenDefs>
);
const OfficeBars = ({ c, l, tile }) => (
  <>
    {c.map((k, i) => <rect key={i} x="11" y={8 + i * 8} width="26" height="8.2" fill={k} />)}
    <rect x="1" y="15" width="19" height="19" rx="1.5" fill={tile} />
    <text x="10.5" y="30" fontSize="15" fontWeight="700" fontFamily="Open Sans" fill="#fff" textAnchor="middle">{l}</text>
  </>
);
const PolarBear = () => (
  <Svg w={76} h={38}>
    <path d="M36 16 46 3 52 8 58 4 66 8 74 10V22H36Z" fill="#6c74b4" />
    <circle cx="60" cy="5" r="5" fill="#f6cfae" />
    <path d="M50 11 56 6 62 9 68 6 74 10V22H50Z" fill="#7c83c4" />
    <path d="M0 24C6 18 14 15 24 14L30 37H20C12 36 4 30 0 24Z" fill="#d5e8f7" />
    <path d="M12 28C20 17 44 18 74 14 75 26 70 37 58 37H24C16 36 13 32 12 28Z" fill="url(#ice)" />
    <path d="M20 32C30 36 52 36 62 31L56 25H22Z" fill="#466c9c" />
    <path d="M17 10c-3-4 1-5 3-3 3-2 6-2 8 0 3-2 5 0 3 4 8-3 20-5 26 3 5 6 6 13 1 15-4 2-7 0-8-3-6 3-20 4-30 2-4-1-2-5 3-5l5-2c-7 0-11-6-11-11Z" fill="#efe5f2" />
    <path d="M42 22c4 1 7 2 8 4M24 26H40" stroke="#c9bfd8" strokeWidth="1.4" />
    <circle cx="21" cy="12" r="1" fill="#222" /><circle cx="27" cy="12" r="1" fill="#222" /><ellipse cx="24" cy="16.5" rx="1.8" ry="1.3" fill="#222" />
  </Svg>
);

const WinBar = () => (
  <Taskbar>
    <Defs />
    <Slot $w={50} $ml={26}>
      <Svg w={50} h={60}>
        <circle cx="22" cy="31" r="16" fill="url(#sun)" />
        <path d="M15 49a7 7 0 0 1 0-13.5C18 27 30 28 32 35c7 0 8 13-1 14Z" fill="url(#cl)" />
        <circle cx="31.5" cy="16.5" r="12" fill="#ff99a4" />
        <text x="31.5" y="22" fontSize="16" fontFamily="Open Sans" fill="#111" textAnchor="middle">8</text>
      </Svg>
    </Slot>
    <TwoLines $w={200} $ml={-0.5} $c2="#c4c4c4" $ls={-0.05}><span>10°C</span><span>Partly sunny</span></TwoLines>
    <Slot $w={36} $ml={521.5}>
      <Svg w={36} h={36}><path d="M0 0H17V17H0ZM19 0H36V17H19ZM0 19H17V36H0ZM19 19H36V36H19Z" fill="url(#win)" /></Svg>
    </Slot>
    <SearchPill>
      <Svg w={24} h={24} stroke="#e8e8e8" strokeWidth="2.4"><circle cx="10" cy="9.5" r="7.8" /><path d="M15 15.5 22 22.5" /></Svg>
      <Label $s={19.2} $c="#dedede" $ml={14} $w={195} $ls={-0.1}>Search</Label>
      <PolarBear />
    </SearchPill>
    <Apps>
      <AppIcon viewBox="0 0 38 48">
        <path d="M11 10H24C28 10 28 14 30 18H22c-4 0-4 6-6 12-1 3-3 4-6 4H5c-4 0-3-5-1-12 2-6 3-12 7-12Z" fill="url(#cpA)" />
        <path d="M18 10H24C28 10 28 14 30 18H22L18 16Z" fill="#1a52c8" />
        <path d="M27 40H14C10 40 10 36 8 33H16c4 0 4-6 6-12 1-3 3-4 6-4h5c4 0 3 5 1 12-2 6-3 11-7 11Z" fill="url(#cpB)" />
      </AppIcon>
      <AppIcon viewBox="0 0 38 48">
        <path d="M1 11a2 2 0 0 1 2-2H12L16 13V18H1Z" fill="#dd9a05" />
        <path d="M1 16H14L18 12H35a2 2 0 0 1 2 2V39a2 2 0 0 1-2 2H3a2 2 0 0 1-2-2Z" fill="url(#fold)" />
        <path d="M7 41V34a3 3 0 0 1 3-3H28a3 3 0 0 1 3 3V41Z" fill="#1080d8" /><path d="M12 36H26" stroke="#0a4f92" strokeWidth="2" />
      </AppIcon>
      <AppIcon viewBox="0 0 38 48">
        <circle cx="19" cy="24" r="18" fill="#fbc116" />
        <path d="M19 24 3.4 15A18 18 0 0 1 34.6 15H19Z" fill="#e33b2e" />
        <path d="M3.4 15A18 18 0 0 0 19 42L26.8 28.5 19 24 11.2 28.5Z" fill="#229342" />
        <path d="M19 15H34.6A18 18 0 0 1 19 42L26.8 28.5Z" fill="#fbc116" />
        <circle cx="19" cy="24" r="9" fill="#fff" /><circle cx="19" cy="24" r="7.2" fill="#1a73e8" />
        <rect x="14.5" y="48.5" width="9" height="5" rx="2.5" fill="#9a9a9a" />
      </AppIcon>
      <AppIcon viewBox="0 0 38 48">
        <path d="M8 20 22 9 36 19V38a2 2 0 0 1-2 2H10a2 2 0 0 1-2-2Z" fill="#1b86d8" />
        <path d="M13 19 28 9 34 14 18 26Z" fill="#41b4f2" />
        <path d="M18 25 35 14 37 18 22 30Z" fill="#0d3f8a" />
        <path d="M10 40 37 21V37a3 3 0 0 1-3 3Z" fill="#4fd0fb" />
        <rect x="1" y="15" width="18" height="18" rx="1.5" fill="#0a63c4" />
        <text x="10" y="29.5" fontSize="14" fontWeight="700" fontFamily="Open Sans" fill="#fff" textAnchor="middle">O</text>
      </AppIcon>
      <AppIcon viewBox="0 0 38 48">
        <path d="M19 6C8.5 6 1 13.5 1 23.5c0 5.3 2.2 9.8 6 13V42l5.500-2.8c2 .6 4.2.8 6.5.8 10.5 0 18-7 18-16.5S29.5 6 19 6Z" fill="url(#msg)" />
        <path d="M8.5 28.5 14.5 19.5 20 23.5 29.5 18.5 23.5 27.5 18 23.8Z" fill="#fff" stroke="#fff" strokeWidth="1.5" strokeLinejoin="round" />
      </AppIcon>
      <AppIcon viewBox="0 0 38 48">
        <path d="M2.5 40.5 5 31.5A16.3 16.3 0 1 1 11.5 38Z" fill="none" stroke="#25d366" strokeWidth="3.2" />
        <path d="M13 15c-3 1-4 5-1 9s7 8 12 8c3 0 5-2 4.5-4.5L24 25l-2.5 2.5c-3-1-5-3-6-6L17.5 19 15.5 15Z" fill="#25d366" />
        <circle cx="33" cy="11.5" r="12" fill="#4cc2ff" />
        <text x="33" y="17.5" fontSize="16.5" fontFamily="Open Sans" fill="#000" textAnchor="middle">2</text>
      </AppIcon>
      <AppIcon viewBox="0 0 38 48"><OfficeBars c={["#2bb673", "#1fa463", "#138048", "#185c37"]} l="X" tile="#107c41" /></AppIcon>
      <AppIcon viewBox="0 0 38 48"><OfficeBars c={["#41a5ee", "#2b7cd3", "#185abd", "#103f91"]} l="W" tile="#185abd" /></AppIcon>
      <AppIcon viewBox="0 0 38 48">
        <rect x="1" y="6" width="28" height="27" rx="2" fill="#f3f3f3" />
        <path d="M6 24V11H22" stroke="#d83b01" strokeWidth="3" strokeDasharray="4 2" fill="none" />
        <path d="M24 14V32M8 28H30" stroke="#9aa0a6" strokeWidth="4" fill="none" />
        <circle cx="33" cy="25" r="3" stroke="#1c9be8" strokeWidth="2.2" fill="none" /><circle cx="21" cy="38" r="3" stroke="#1c9be8" strokeWidth="2.2" fill="none" />
      </AppIcon>
    </Apps>
    <Grow />
    <Slot $w={40}><Svg w={16} h={10} stroke="#fff" strokeWidth="2"><path d="M1 9 8 2 15 9" /></Svg></Slot>
    <Slot $w={30} $ml={11}>
      <Svg w={26} h={20}>
        <path d="M6 18a6 6 0 0 1-1-11C8 0 16 0 18 5l4 8-6 5Z" fill="#a8a8a8" /><path d="M5 18a5 5 0 0 1 0-9c5-1 8 2 9 9Z" fill="#ededed" />
        <circle cx="18" cy="15" r="6.8" fill="#d6202b" /><path d="M15.3 12.3 20.7 17.7M20.7 12.3 15.3 17.7" stroke="#fff" strokeWidth="1.8" />
      </Svg>
    </Slot>
    <Label $s={17} $w={37} $ml={27} $c="#fff">ENG</Label>
    <Slot $w={26} $ml={25}>
      <Svg w={25} h={25} stroke="#fff" strokeWidth="1.7"><path d="M16 2H3a2 2 0 0 0-2 2V17a2 2 0 0 0 2 2H18M7 19V23M13 19V23M5 23.5H15" /><rect x="17" y="1" width="6.5" height="9" rx="2" /><path d="M20.3 10V24" /></Svg>
    </Slot>
    <Slot $w={26} $ml={9}>
      <Svg w={26} h={20} stroke="#fff" strokeWidth="1.7"><path d="M1 7H5L10.5 1.5V18.5L5 13H1Z" strokeLinejoin="round" /><path d="M13.5 6.5a5 5 0 0 1 0 7" /><path d="M17 3.5a9 9 0 0 1 0 13M20.5 1a13 13 0 0 1 0 18" stroke="#6a6a6a" /></Svg>
    </Slot>
    <Slot $w={26} $ml={10}>
      <Svg w={25} h={16} stroke="#fff" strokeWidth="1.7"><rect x="1" y="1" width="20" height="14" rx="3" /><path d="M22.5 6V10" strokeWidth="2.5" /><rect x="4" y="4" width="8" height="8" fill="#fff" stroke="none" /></Svg>
    </Slot>
    <TwoLines $w={100} $ml={6} $align="right" $ls={0.15}><span>5:57 PM</span><span>27-Feb-25</span></TwoLines>
    <Slot $w={29} />
  </Taskbar>
);

export default function App() {
  return (
    <Screen>
      <Global />
      <Browser />
      <AppHeader />
      <Tools />
      <Body>
        <SidePanel />
        <Work>
          <CanvasRow>
            <Diagram />
            <VTrack><VThumb /></VTrack>
          </CanvasRow>
          <HTrack><HThumb /></HTrack>
          <Bottom />
        </Work>
      </Body>
      <WinBar />
    </Screen>
  );
}
